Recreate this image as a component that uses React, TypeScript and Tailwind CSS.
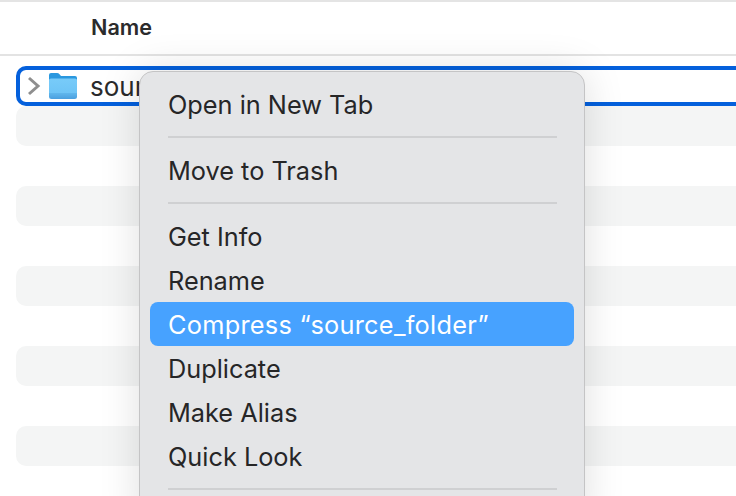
const stripes = [0, 1, 2, 3, 4, 5, 6, 7, 8, 9]

function FolderIcon() {
  return (
    <svg width="32" height="30" viewBox="0 0 32 30" className="shrink-0">
      <defs>
        <linearGradient id="folderBody" x1="0" y1="0" x2="0" y2="1">
          <stop offset="0" stopColor="#78cbf9" />
          <stop offset="0.7" stopColor="#6ec4f6" />
          <stop offset="0.72" stopColor="#5fb6ec" />
          <stop offset="1" stopColor="#4a9fdf" />
        </linearGradient>
      </defs>
      <path d="M2 7 V4 Q2 2 4 2 H10 Q11.5 2 12.5 3.2 L14 5 H28 Q30 5 30 7 V10 H2 Z" fill="#2a98df" />
      <path d="M2 9 Q2 7.5 4 7.5 H28 Q30 7.5 30 9 V25.5 Q30 28 27.5 28 H4.5 Q2 28 2 25.5 Z" fill="url(#folderBody)" />
    </svg>
  )
}

function MenuItem({ label, active }: { label: string; active?: boolean }) {
  return (
    <div className={active ? 'flex h-[44px] items-center rounded-[8px] bg-[#47a2ff] pl-[18px] pt-[2px] tracking-[0.28px] text-white' : 'flex h-[44px] items-center pl-[18px] pt-[2px] text-[#262627]'}>
      {label}
    </div>
  )
}

function MenuSeparator() {
  return (
    <div className="flex h-[22px] items-center pl-[18px] pr-[17px]">
      <div className="h-[2px] w-full bg-[#cfd0d2]" />
    </div>
  )
}

export default function App() {
  return (
    <div className="relative h-[496px] w-[736px] overflow-hidden bg-white font-['Inter','Liberation_Sans',sans-serif]">
      <div className="h-[2px] bg-[#e4e4e4]" />
      <div className="flex h-[54px] items-center border-b-2 border-[#e3e3e3] pb-[2px] pl-[91px] text-[21.6px] font-semibold text-[#2b2b2c]">
        Name
      </div>

      <div className="pl-[16px] pt-[10px]">
        <div className="-mr-[20px] flex h-[40px] items-center rounded-[10px] border-4 border-[#0460dc] pl-[6px] text-[26px] text-[#2a2a2b]">
          <svg width="16" height="22" viewBox="0 0 16 22" fill="none" className="shrink-0">
            <path d="M3 3 L12 11 L3 19" stroke="#8e8e8e" strokeWidth="3" />
          </svg>
          <div className="ml-[5px]"><FolderIcon /></div>
          <span className="ml-[11px]">source_folder</span>
        </div>
        {stripes.map((i) => (
          <div key={i} className={i % 2 === 0 ? 'h-[40px] rounded-l-[10px] bg-[#f4f5f5]' : 'h-[40px] bg-white'} />
        ))}
      </div>

      <div className="absolute left-[139px] top-[71px] h-[460px] w-[446px] rounded-[14px] border border-[#c4c4c5] bg-[#e4e5e7] px-[10px] pt-[10px] text-[25.3px] shadow-[0_0_40px_rgba(0,0,0,0.13)]">
        <MenuItem label="Open in New Tab" />
        <MenuSeparator />
        <MenuItem label="Move to Trash" />
        <MenuSeparator />
        <MenuItem label="Get Info" />
        <MenuItem label="Rename" />
        <MenuItem label="Compress “source_folder”" active />
        <MenuItem label="Duplicate" />
        <MenuItem label="Make Alias" />
        <MenuItem label="Quick Look" />
        <MenuSeparator />
      </div>
    </div>
  )
}
